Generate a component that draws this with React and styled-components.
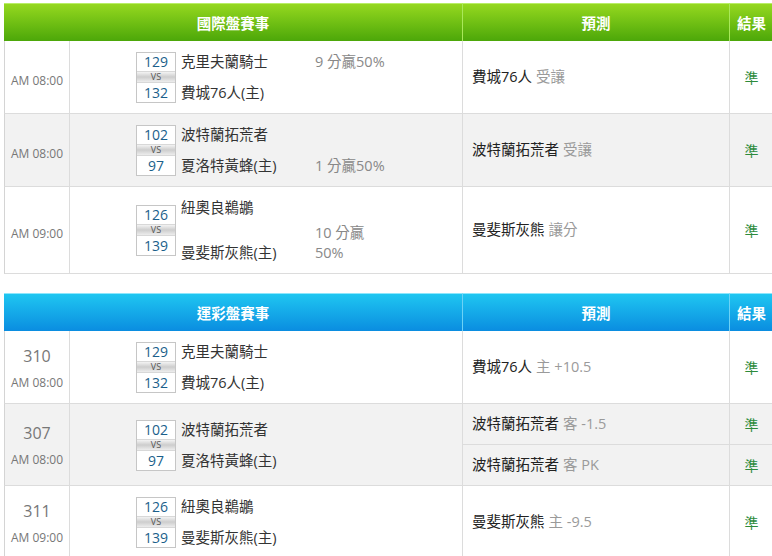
import React from "react";
import styled, { createGlobalStyle, css } from "styled-components";

const Global = createGlobalStyle`
  html, body { margin: 0; padding: 0; background: #fff; overflow: hidden; }
  body { font-family: "Open Sans", "Noto Sans CJK TC", sans-serif; color: #222; }
`;

const Page = styled.div`
  padding: 3px 0 0 4px;
  width: 772px;
`;

const Board = styled.div`
  display: grid;
  grid-template-columns: 66px 393px 267px 45px;
  width: 771px;
  margin-bottom: 19px;
`;

const themes = {
  green: { top: "#95d81f", bottom: "#4ca709", line: "#a9e85a", edge: "#b8ee66" },
  blue: { top: "#1fc6f1", bottom: "#0a8de0", line: "#6cd2f6", edge: "#8ee6fc" },
};

const HeadCell = styled.div`
  height: 38px;
  box-sizing: border-box;
  display: flex;
  align-items: center;
  justify-content: center;
  color: #fff;
  font-weight: bold;
  font-size: 14.5px;
  background: linear-gradient(${(p) => themes[p.$tone].top}, ${(p) => themes[p.$tone].bottom});
  border-top: 1px solid ${(p) => themes[p.$tone].edge};
  border-right: 1px solid ${(p) => themes[p.$tone].line};
  ${(p) => p.$wide && css`grid-column: span 2;`}
  ${(p) => p.$last && css`border-right: none; justify-content: flex-start; padding-left: 7px;`}
`;

const cellBase = css`
  box-sizing: border-box;
  border-bottom: 1px solid #dcdcdc;
  border-right: 1px solid #dcdcdc;
  background: ${(p) => (p.$alt ? "#f2f2f2" : "#fff")};
  ${(p) => p.$span && css`grid-row: span 2;`}
`;

const TimeCell = styled.div`
  ${cellBase};
  border-left: 1px solid #d4d4d4;
  display: flex;
  flex-direction: column;
  align-items: center;
  justify-content: center;
  color: #777;
  padding-top: ${(p) => (p.$numbered ? 2 : 8)}px;
`;

const GameNo = styled.div`
  font-size: 16px;
  line-height: 24px;
  margin-bottom: 5px;
`;

const Clock = styled.div`
  font-size: 12px;
  line-height: 20px;
`;

const MatchCell = styled.div`
  ${cellBase};
  display: flex;
  align-items: center;
  padding: 11px 0 10px 66px;
`;

const ScoreBox = styled.div`
  width: 40px;
  box-sizing: border-box;
  border: 1px solid #c6c6c6;
  display: flex;
  flex-direction: column;
  margin-right: 5px;
  background: #fff;
`;

const ScoreNum = styled.div`
  height: ${(p) => (p.$bottom ? 19 : 18)}px;
  line-height: ${(p) => (p.$bottom ? 19 : 18)}px;
  text-align: center;
  font-size: 14px;
  color: #1b5f8b;
`;

const Vs = styled.div`
  height: 10px;
  line-height: 10px;
  font-size: 9px;
  text-align: center;
  color: #555;
  background: linear-gradient(#f3f3f3, #cdcdcd 50%, #ededed);
  border-top: 1px solid #d8d8d8;
  border-bottom: 1px solid #d8d8d8;
`;

const Teams = styled.div`
  display: grid;
  grid-template-columns: 134px 76px;
  row-gap: ${(p) => (p.$tight ? 5 : 11)}px;
  align-items: end;
  font-size: 14.5px;
  line-height: 20px;
`;

const TeamName = styled.div`
  color: #333;
  white-space: nowrap;
`;

const Odds = styled.div`
  color: #888;
`;

const PredCell = styled.div`
  ${cellBase};
  display: flex;
  align-items: center;
  padding: 10px 0 10px 9px;
  font-size: 14.5px;
  line-height: 20px;
  min-height: 41px;
`;

const PredTeam = styled.span`
  color: #222;
`;

const PredNote = styled.span`
  color: #9a9a9a;
  margin-left: 4px;
`;

const ResultCell = styled.div`
  ${cellBase};
  border-right: none;
  display: flex;
  align-items: center;
  justify-content: center;
  padding-right: 2px;
  font-size: 14px;
  color: #2d8b3c;
`;

const intl = [
  { time: "AM 08:00", s1: 129, s2: 132, t1: "克里夫蘭騎士", t2: "費城76人(主)", o1: "9 分贏50%", pred: [["費城76人", "受讓"]] },
  { time: "AM 08:00", s1: 102, s2: 97, t1: "波特蘭拓荒者", t2: "夏洛特黃蜂(主)", o2: "1 分贏50%", pred: [["波特蘭拓荒者", "受讓"]] },
  { time: "AM 09:00", s1: 126, s2: 139, t1: "紐奧良鵜鶘", t2: "曼斐斯灰熊(主)", o2: "10 分贏50%", tight: true, pred: [["曼斐斯灰熊", "讓分"]] },
];

const lottery = [
  { no: "310", time: "AM 08:00", s1: 129, s2: 132, t1: "克里夫蘭騎士", t2: "費城76人(主)", pred: [["費城76人", "主 +10.5"]] },
  { no: "307", time: "AM 08:00", s1: 102, s2: 97, t1: "波特蘭拓荒者", t2: "夏洛特黃蜂(主)", pred: [["波特蘭拓荒者", "客 -1.5"], ["波特蘭拓荒者", "客 PK"]] },
  { no: "311", time: "AM 09:00", s1: 126, s2: 139, t1: "紐奧良鵜鶘", t2: "曼斐斯灰熊(主)", pred: [["曼斐斯灰熊", "主 -9.5"]] },
];

function Game({ g, alt }) {
  const span = g.pred.length > 1;
  return (
    <>
      <TimeCell $alt={alt} $span={span} $numbered={!!g.no}>
        {g.no && <GameNo>{g.no}</GameNo>}
        <Clock>{g.time}</Clock>
      </TimeCell>
      <MatchCell $alt={alt} $span={span}>
        <ScoreBox>
          <ScoreNum>{g.s1}</ScoreNum>
          <Vs>VS</Vs>
          <ScoreNum $bottom>{g.s2}</ScoreNum>
        </ScoreBox>
        <Teams $tight={g.tight}>
          <TeamName>{g.t1}</TeamName>
          <Odds>{g.o1 || ""}</Odds>
          <TeamName>{g.t2}</TeamName>
          <Odds>{g.o2 || ""}</Odds>
        </Teams>
      </MatchCell>
      {g.pred.map(([team, note], i) => (
        <React.Fragment key={i}>
          <PredCell $alt={alt}>
            <PredTeam>{team}</PredTeam>
            <PredNote>{note}</PredNote>
          </PredCell>
          <ResultCell $alt={alt}>準</ResultCell>
        </React.Fragment>
      ))}
    </>
  );
}

function Section({ title, tone, games }) {
  return (
    <Board>
      <HeadCell $tone={tone} $wide>{title}</HeadCell>
      <HeadCell $tone={tone}>預測</HeadCell>
      <HeadCell $tone={tone} $last>結果</HeadCell>
      {games.map((g, i) => (
        <Game key={i} g={g} alt={i % 2 === 1} />
      ))}
    </Board>
  );
}

export default function App() {
  return (
    <Page>
      <Global />
      <Section title="國際盤賽事" tone="green" games={intl} />
      <Section title="運彩盤賽事" tone="blue" games={lottery} />
    </Page>
  );
}
